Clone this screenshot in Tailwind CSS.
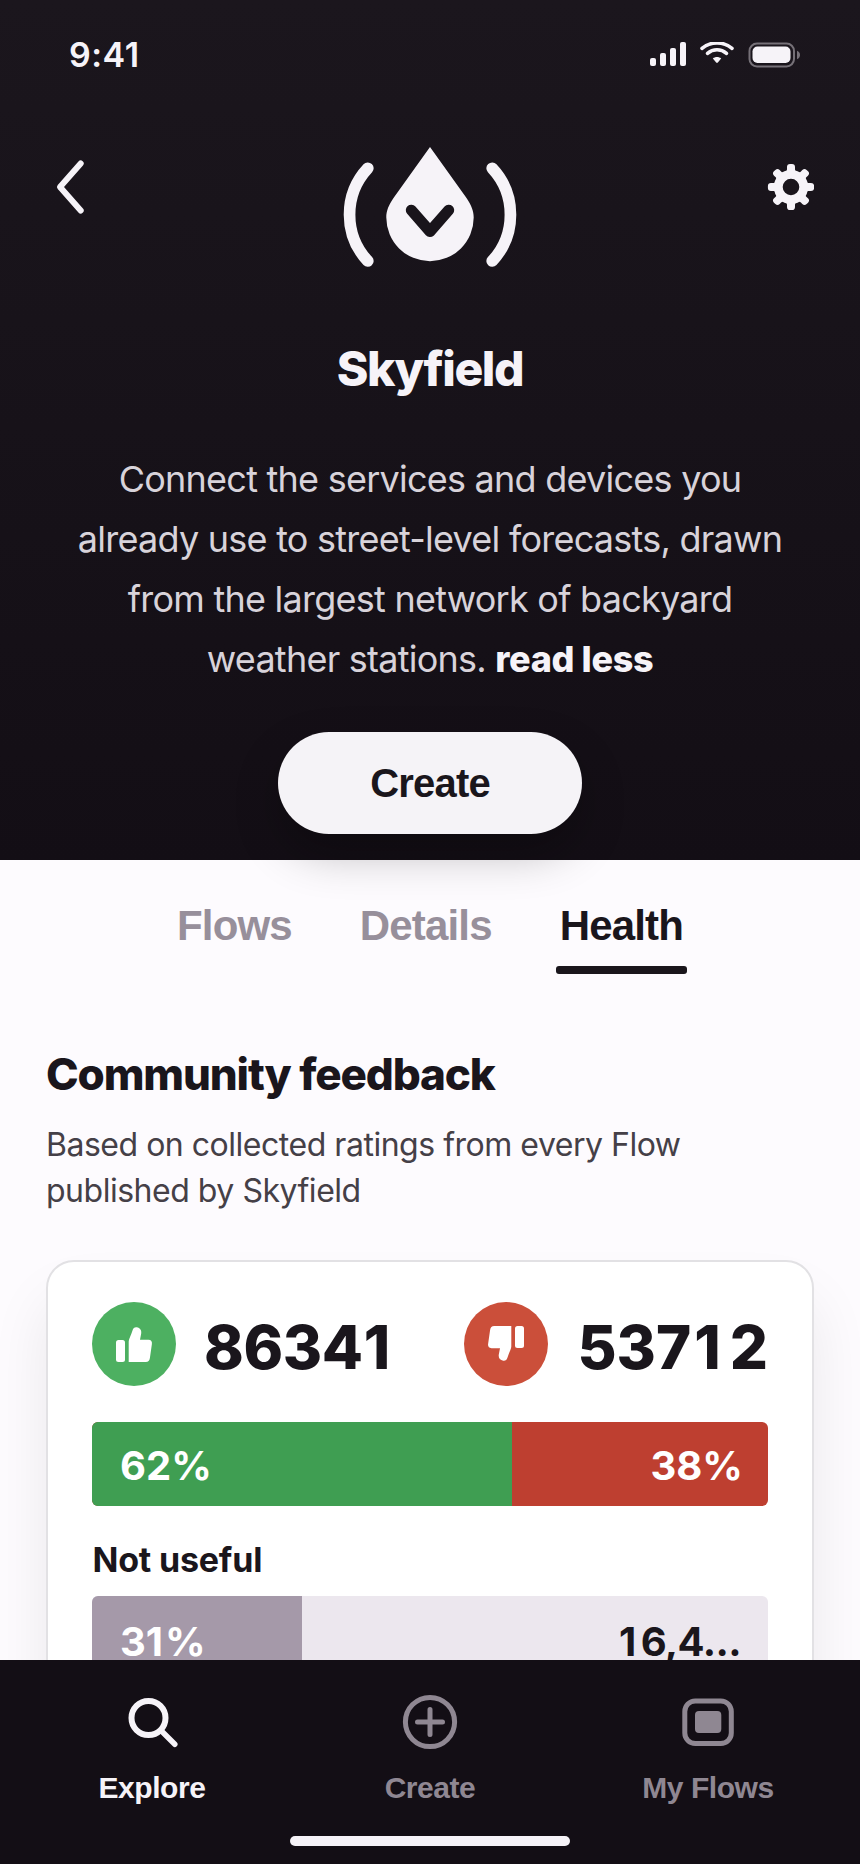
<!DOCTYPE html>
<html lang="en">
<head>
<meta charset="utf-8">
<meta name="viewport" content="width=device-width, initial-scale=1">
<title>Skyfield</title>
<script src="https://cdn.jsdelivr.net/npm/@tailwindcss/browser@4"></script>
</head>
<body class="bg-[#fdfbfe]">
<div class="flex h-[1864px] w-[860px] flex-col overflow-hidden bg-[#fdfbfe] font-['Inter',sans-serif] text-[#1a161c]">

  <header class="relative z-10 flex h-[860px] shrink-0 flex-col items-center bg-linear-to-b from-[#1b161d] to-[#130e15] text-[#f6f3f8]">
    <div class="flex h-[108px] w-full items-center justify-between pr-[60px] pl-[69px]">
      <span class="pt-px text-[34px] leading-[40px] font-semibold tracking-[0.5px]">9:41</span>
      <svg class="h-[28px] w-[150px]" viewBox="650 40 150 28" fill="#f6f3f8">
        <rect x="650" y="58" width="6" height="8" rx="2"/>
        <rect x="660" y="53" width="6" height="13" rx="2"/>
        <rect x="670" y="48" width="6" height="18" rx="2"/>
        <rect x="680" y="42" width="6" height="24" rx="2"/>
        <clipPath id="wifi"><rect x="698" y="42" width="40" height="24"/></clipPath>
        <g clip-path="url(#wifi)" fill="none" stroke="#f6f3f8" stroke-width="3.6" stroke-linecap="round">
          <path d="M702 48.3C710.5 41.2 723.5 41.2 732 48.3"/>
          <path d="M707.5 53.3C713 48.6 721 48.6 726.5 53.3"/>
        </g>
        <path d="M712.8 58.6c2.4-2 6-2 8.400 0l-3.400 4q-.8.7-1.600 0z"/>
        <rect x="749.500" y="43.500" width="44.500" height="23" rx="7.500" fill="none" stroke="#767178" stroke-width="2"/>
        <rect x="752.500" y="46.500" width="38" height="16.500" rx="5"/>
        <path d="M797 50.800c4 1.200 4 7.200 0 8.400z" fill="#767178"/>
      </svg>
    </div>

    <div class="mt-[39px] flex h-[122px] w-full items-start justify-between px-[46px]">
      <svg class="mt-4 size-12 overflow-visible" viewBox="46 163 48 48" fill="none" stroke="#f6f3f8" stroke-width="6" stroke-linecap="round" stroke-linejoin="round"><path d="M80.700 163.400L60 187l20.700 23.600"/></svg>
      <svg class="h-[122px] w-[180px]" viewBox="340 147 180 122" fill="none" stroke-linecap="round" stroke-linejoin="round">
        <g stroke="#f6f3f8" stroke-width="11.700">
          <path d="M367.800 168.300a68 68 0 0 0 0 92.700"/>
          <path d="M492.200 168.300a68 68 0 0 1 0 92.700"/>
        </g>
        <path fill="#f6f3f8" d="M430 147L466.500 198C471.500 205.500 473.700 211 473.700 217.500a43.700 43.700 0 0 1-87.400 0C386.300 211 388.500 205.500 393.500 198z"/>
        <path stroke="#19141b" stroke-width="11" d="M411.300 210.200L430 231.500L448.700 210.200"/>
      </svg>
      <svg class="mt-4 size-12" viewBox="766 163 48 48">
        <circle cx="791" cy="187" r="12.700" fill="none" stroke="#f6f3f8" stroke-width="8.800"/>
        <g fill="#f6f3f8">
          <path id="tooth" d="M785 173C786.500 171.500 787 170.500 787 169V167Q787 163.900 790 163.900H792Q795 163.900 795 167V169C795 170.500 795.500 171.500 797 173z"/>
          <use href="#tooth" transform="rotate(45 791 187)"/><use href="#tooth" transform="rotate(90 791 187)"/><use href="#tooth" transform="rotate(135 791 187)"/><use href="#tooth" transform="rotate(180 791 187)"/><use href="#tooth" transform="rotate(225 791 187)"/><use href="#tooth" transform="rotate(270 791 187)"/><use href="#tooth" transform="rotate(315 791 187)"/>
        </g>
      </svg>
    </div>

    <h1 class="mt-[70px] text-[48px] leading-[60px] font-extrabold tracking-[-0.03em]">Skyfield</h1>

    <p class="mt-[50px] text-center text-[36px] leading-[60px] tracking-[-0.021em] text-[#d8d3da]">
      Connect the services and devices you<br>already use to street-level forecasts, drawn<br>from the largest network of backyard<br>weather stations. <b class="font-extrabold tracking-[-0.01em] text-[#f6f3f8]">read less</b>
    </p>

    <button class="mt-[43px] h-[102px] w-[304px] shrink-0 rounded-full bg-[#f5f3f7] pb-px font-['Liberation_Sans',Arial,sans-serif] text-[40px] font-bold tracking-[-0.02em] text-[#1a161c] shadow-[0_20px_48px_-4px_rgba(0,0,0,0.3)]">Create</button>
  </header>

  <main class="h-[800px] shrink-0 overflow-hidden">
    <nav class="flex justify-center gap-[60px] pt-[42px] font-['Liberation_Sans',Arial,sans-serif] text-[42px] leading-[48px] font-bold tracking-[-0.02em] text-[#978f9b]">
      <div class="px-1">Flows</div>
      <div class="px-1">Details</div>
      <div class="text-[#1a161c]"><div class="px-1">Health</div><div class="mt-[16px] h-2 rounded-[3px] bg-[#1a161c]"></div></div>
    </nav>

    <section class="px-[46px] pt-[72px]">
      <h2 class="text-[44px] leading-[56px] font-extrabold tracking-[-0.026em]">Community feedback</h2>
      <p class="mt-[20px] text-[32px] leading-[46px] tracking-[-0.015em] text-[#454047]">Based on collected ratings from every Flow<br>published by Skyfield</p>

      <div class="mt-[46px] h-[520px] rounded-[28px] border-2 border-[#e2e1e4] bg-white px-[44px] pt-10 shadow-[0_40px_60px_rgba(0,0,0,0.08)]">
        <div class="flex h-[84px] justify-between text-[60px] leading-[90px] font-extrabold">
          <div class="flex gap-[28px]">
            <svg class="size-[84px]" viewBox="-42 -42 84 84" fill="#fff"><circle r="42" fill="#4db061"/><g id="thumb"><rect x="-18" y="-4" width="9" height="22" rx="2.500"/><path d="M-5.300 18V-2.500C-5.300 -5 -3 -8.500 -1.500 -13.500C-.8 -16 .8 -17 2.700 -16.700C6.300 -16 7.700 -13.500 7.200 -10.500L6 -4.200H14.500C17 -4.200 18.300 -2.500 17.900 0L15.900 14C15.500 16.800 14.300 18 11.800 18z"/></g></svg>
            <span class="tracking-[-0.4px]">8634<span class="ml-px">1</span></span>
          </div>
          <div class="flex gap-[29px]">
            <svg class="size-[84px]" viewBox="-42 -42 84 84" fill="#fff"><circle r="42" fill="#cb4f3a"/><use href="#thumb" transform="rotate(180)"/></svg>
            <span>537<span class="mr-[9px] ml-[3px]">1</span>2</span>
          </div>
        </div>

        <div class="mt-9 flex h-[84px] overflow-hidden rounded-[6px] bg-[#be3f30] text-[40px] leading-[88px] font-bold text-white">
          <div class="bg-[#3f9e52] pl-[28px]" style="width:62.1%">62%</div>
          <div class="flex-1 pr-[25px] text-right">38%</div>
        </div>

        <h3 class="mt-[32px] pl-[0.5px] text-[34px] leading-[44px] font-bold tracking-[-0.2px]">Not useful</h3>
        <div class="mt-[14px] flex h-[88px] overflow-hidden rounded-[6px] bg-[#ece7ee] text-[40px] leading-[92px] font-bold">
          <div class="bg-[#a599a9] pl-[28px] text-white" style="width:31%">3<span class="mr-[2px]">1</span>%</div>
          <div class="flex-1 pr-[27px] text-right tracking-[-0.015em]"><span class="mr-[5px]">1</span>6,4...</div>
        </div>
      </div>
    </section>
  </main>

  <footer class="relative z-20 flex h-[204px] shrink-0 flex-col items-center bg-[#130e15] font-['Liberation_Sans',Arial,sans-serif] text-[30px] leading-[36px] font-bold tracking-[-0.015em] text-[#8f8792]">
    <div class="grid w-[834px] grid-cols-3 pt-[32px]">
      <div class="flex flex-col items-center text-[#f6f3f8]">
        <svg class="size-[60px]" viewBox="121.500 1692 60 60" fill="none" stroke="#f6f3f8" stroke-linecap="round"><circle cx="148" cy="1718" r="17" stroke-width="6"/><path stroke-width="5.500" d="M160.500 1730.500L174.300 1744.300"/></svg>
        <span class="mt-[18px]">Explore</span>
      </div>
      <div class="flex flex-col items-center">
        <svg class="size-[60px]" viewBox="400 1692 60 60" fill="none" stroke="#8f8792" stroke-width="5" stroke-linecap="round"><circle cx="430" cy="1722" r="24.600"/><path d="M417.500 1722h25M430 1709.500v25"/></svg>
        <span class="mt-[18px]">Create</span>
      </div>
      <div class="flex flex-col items-center">
        <svg class="size-[60px]" viewBox="678 1692 60 60"><rect x="684.800" y="1701" width="46.500" height="42.500" rx="10.500" fill="none" stroke="#8f8792" stroke-width="5"/><rect x="695" y="1711" width="26.300" height="22" rx="4" fill="#8f8792"/></svg>
        <span class="mt-[18px]">My Flows</span>
      </div>
    </div>
    <div class="mt-[30px] h-[10px] w-[280px] rounded-full bg-[#f6f3f8]"></div>
  </footer>
</div>
</body>
</html>
